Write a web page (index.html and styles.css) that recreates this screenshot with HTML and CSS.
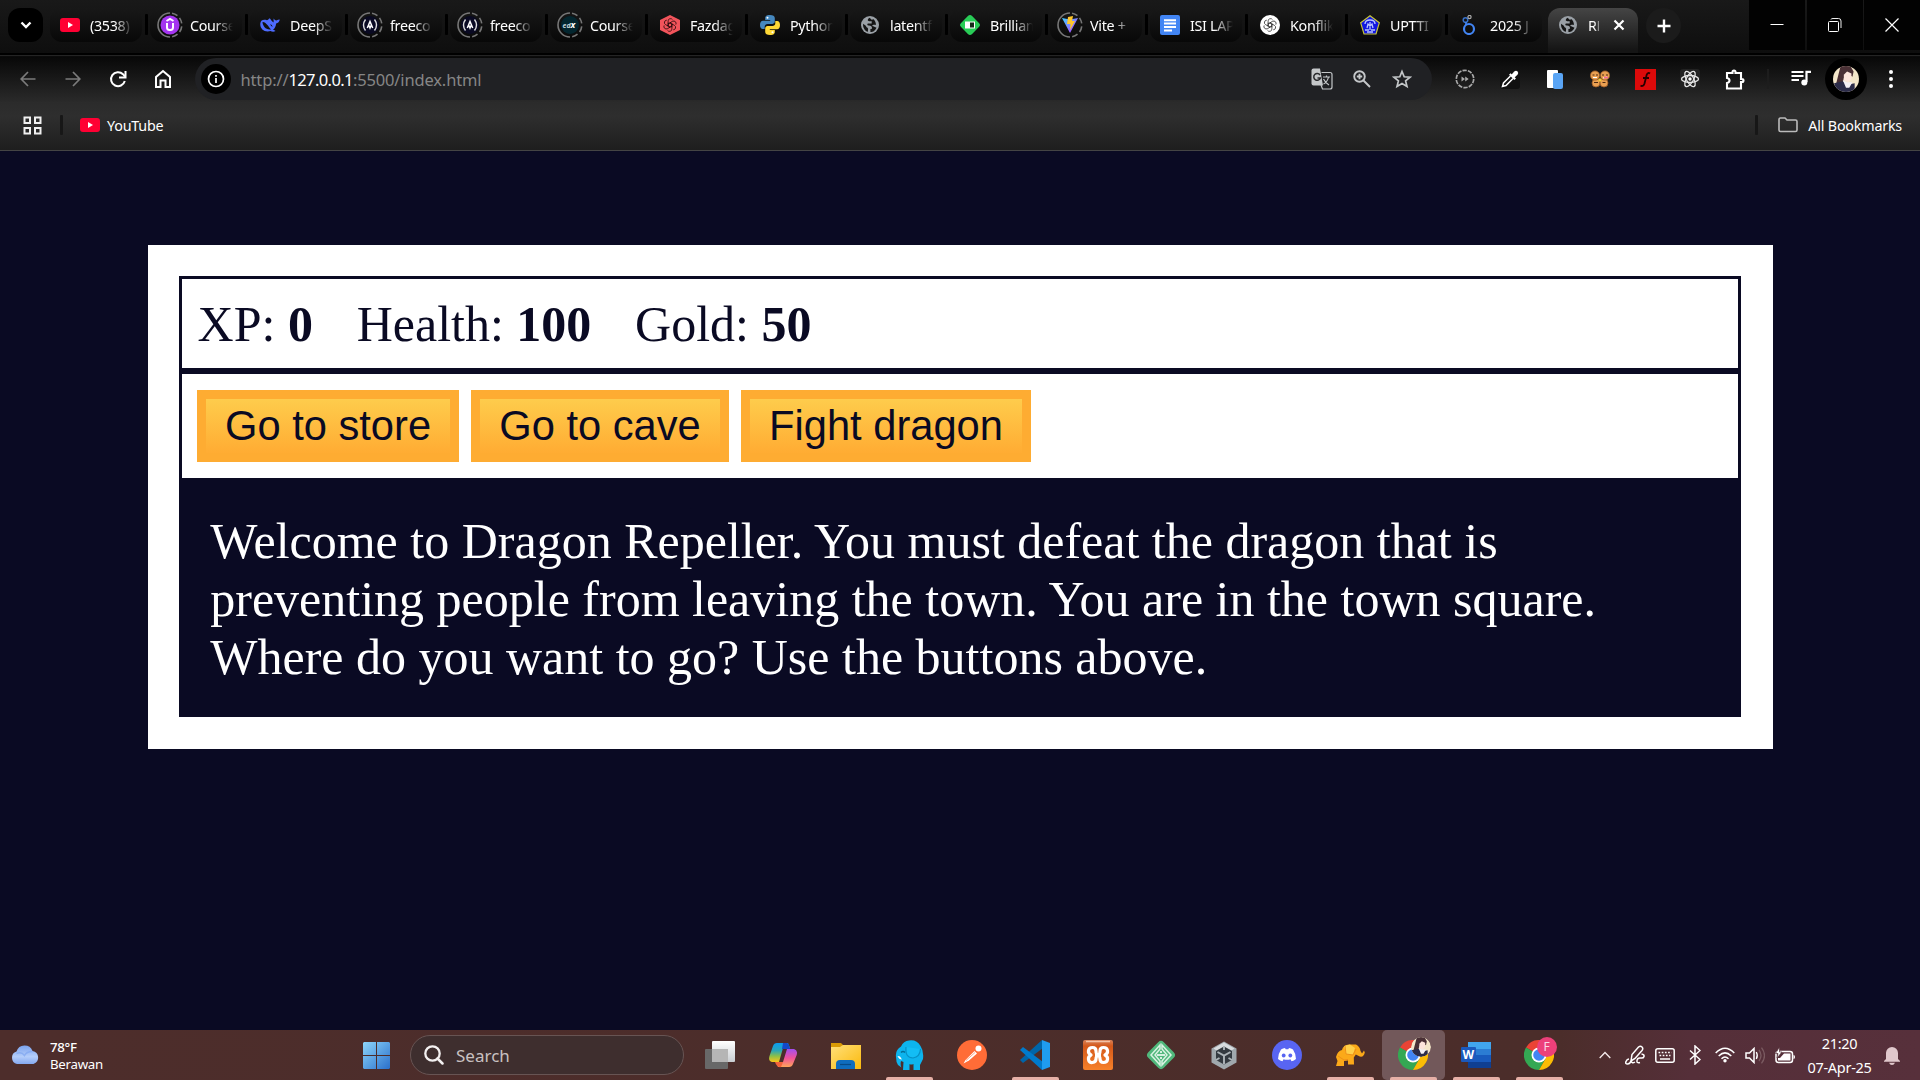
FILE: index.html
```html
<!DOCTYPE html>
<html lang="en">
<head>
<meta charset="utf-8">
<title>RPG - Dragon Repeller</title>
<link rel="stylesheet" href="styles.css">
</head>
<body>
<svg class="defs" width="0" height="0" aria-hidden="true">
  <defs>
    <linearGradient id="gWin" x1="0" y1="0" x2="1" y2="1"><stop offset="0" stop-color="#8dd6fb"/><stop offset="1" stop-color="#2a6fcb"/></linearGradient>
    <linearGradient id="gCloud" x1="0" y1="0" x2="0" y2="1"><stop offset="0" stop-color="#7ba3ee"/><stop offset=".6" stop-color="#b4cdfa"/><stop offset="1" stop-color="#84a8ef"/></linearGradient>
    <linearGradient id="gFolder" x1="0" y1="0" x2="1" y2="1"><stop offset="0" stop-color="#ffe07a"/><stop offset="1" stop-color="#fbb90c"/></linearGradient>
    <linearGradient id="gView" x1="0" y1="0" x2="0" y2="1"><stop offset="0" stop-color="#fff"/><stop offset="1" stop-color="#c9cdd1"/></linearGradient>
    <linearGradient id="gCopL" x1="0" y1="0" x2="0" y2="1"><stop offset="0" stop-color="#0a9df0"/><stop offset=".4" stop-color="#2aa6b8"/><stop offset=".7" stop-color="#8fc046"/><stop offset="1" stop-color="#fcc419"/></linearGradient>
    <linearGradient id="gCopR" x1="0" y1="0" x2="0" y2="1"><stop offset="0" stop-color="#a24ef0"/><stop offset=".5" stop-color="#f0529a"/><stop offset="1" stop-color="#ffa559"/></linearGradient>
    <linearGradient id="gVite" x1="0" y1="0" x2="1" y2="1"><stop offset="0" stop-color="#41d1ff"/><stop offset="1" stop-color="#bd34fe"/></linearGradient>
    <linearGradient id="gXampp" x1="0" y1="0" x2="0" y2="1"><stop offset="0" stop-color="#d9835a"/><stop offset=".2" stop-color="#d4581a"/><stop offset="1" stop-color="#f7812a"/></linearGradient>
    <symbol id="ring" viewBox="0 0 26 26"><path d="M13 1A12 12 0 1 0 13 25" fill="none" stroke="#777" stroke-width="1.600"/><path d="M15 1.200A12 12 0 0 1 15 24.800" fill="none" stroke="#777" stroke-width="1.600" stroke-dasharray="6 3"/></symbol>
    <symbol id="youtube" viewBox="0 0 20 20"><rect y="3" width="20" height="14" rx="3" fill="#f03"/><path d="M8 7v6l5-3z" fill="#fff"/></symbol>
    <symbol id="globe" viewBox="0 0 20 20"><circle cx="10" cy="10" r="9" fill="#9aa0a6"/><path d="M9.800 2.800C7 4.200 7.400 6.300 9.500 6.200h2.200v2.300H8.300c-1.500.1-1.200 2 .2 2.100 2.300-.2 3.700 1 3.500 3.200l-1.600.2v3.100c2.700.1 5.500-2.100 6-4.700-1.500 0-2.700-1.300-4.200-1.400 0-1.500 2.500-1.600 3.800-1.100-.1-2.300-1.100-4.600-2.900-5.800-.4.900-2 .7-2.300-.1zM3 8.700c1.200 1.100 3 1.600 3.200 2.900.3 1.200 1.700.8 1.900 2.200l-.2 3C4.700 16 2.800 12.300 3 8.700z" fill="#151515"/></symbol>
    <symbol id="fcc" viewBox="0 0 26 26"><use href="#ring"/><circle cx="13" cy="13" r="9" fill="#0a0a23"/><path d="M8.500 7.500q-4 5.500 0 11M17.500 7.500q4 5.500 0 11" fill="none" stroke="#ddd" stroke-width="1.400"/><path d="M10.300 16 13 9.500l2.700 6.500M12 13.500l1 2.500 1-2.500" fill="none" stroke="#fff" stroke-width="1.500"/></symbol>
    <symbol id="openai" viewBox="0 0 20 20"><g fill="none" stroke="currentColor" stroke-width="1.100"><path id="petal" d="M7.300 8.400V4.200a3.400 3.400 0 0 1 6.300-1.700M7.300 8.400 10 7l4.200 2.400"/><use href="#petal" transform="rotate(60 10 10)"/><use href="#petal" transform="rotate(120 10 10)"/><use href="#petal" transform="rotate(180 10 10)"/><use href="#petal" transform="rotate(240 10 10)"/><use href="#petal" transform="rotate(300 10 10)"/></g></symbol>
    <symbol id="chrome" viewBox="0 0 30 30"><path d="M15 15 2 7.500A15 15 0 0 1 28 7.500z" fill="#ea4335"/><path d="M15 15 2 7.500A15 15 0 0 0 15 30L21.500 18.750z" fill="#34a853"/><path d="M15 7.500h13A15 15 0 0 1 15 30l6.500-11.250z" fill="#fbbc05"/><circle cx="15" cy="15" r="7.500" fill="#fff"/><circle cx="15" cy="15" r="5.800" fill="#4285f4"/></symbol>
    <symbol id="avatar" viewBox="0 0 24 24"><clipPath id="cAv"><circle cx="12" cy="12" r="12"/></clipPath><g clip-path="url(#cAv)"><path d="M0 0h24v24H0z" fill="#f4e7ca"/><path d="M7 0h9l3 5-1 5-5-3-3 4-1 5-3 2-3-2z" fill="#4a3035"/><path d="M10 8l3-3 4 2v5l-3 3-4-2z" fill="#fde5dc"/><path d="M1 16l8-2 5 3 6-1v8H3z" fill="#2c2c49"/><path d="M9 13l4 2 5 0-3 5-3 0z" fill="#f4f0f5"/></g></symbol>
  </defs>
</svg>

<header class="browser">
  <div class="tabstrip">
    <div class="tab-search"><svg width="14" height="14" viewBox="0 0 14 14"><path d="m2.500 4.500 4.500 4.500 4.500-4.500" fill="none" stroke="#fff" stroke-width="2.400"/></svg></div>
    <div class="tabs">
      <div class="tab"><svg class="fav"><use href="#youtube"/></svg><span>(3538)</span></div>
      <div class="tab"><svg class="fav ringed" viewBox="0 0 26 26"><use href="#ring"/><circle cx="13" cy="13" r="9.500" fill="#a435f0"/><path d="M10 11v4.500q0 2.500 3 2.500t3-2.500V11M9.500 9 13 7l3.500 2" fill="none" stroke="#fff" stroke-width="2"/></svg><span>Course</span></div>
      <div class="tab"><svg class="fav" viewBox="0 0 20 20"><path d="M.3 8.500C.7 4.500 4 4.300 7 5.200 9 4.600 8.300 4 9.800 3.300q1.700 2.800 3.700 4.200c.4-1.700-.2-2.500.2-4 .7 1.300 1.500 1.800 2.700 1.900q1.500-.9 3.400-.9c-.4 2.200-1.700 3.600-3.700 3.900-.2 3-1.500 5-3 6.200.8.800 1.700.9 2.400 1.400-1.500 1-3.500.8-5 .1C4.500 17.800-.2 14 .3 8.500z" fill="#4d6bfe"/><path d="M2.500 7c4.500.2 6.500 6.300 8.700 7.300-4.700 1.200-8.500-3-8.700-7.300zM10 9.200q2.500.3 2.600 2.800-1.800-1-2.600-2.800z" fill="#111"/></svg><span>DeepS</span></div>
      <div class="tab"><svg class="fav ringed"><use href="#fcc"/></svg><span>freeco</span></div>
      <div class="tab"><svg class="fav ringed"><use href="#fcc"/></svg><span>freeco</span></div>
      <div class="tab"><svg class="fav ringed" viewBox="0 0 26 26"><use href="#ring"/><circle cx="13" cy="13" r="9" fill="#03262f"/><text x="5.500" y="16" class="edx">ed<tspan class="edx-x">x</tspan></text></svg><span>Course</span></div>
      <div class="tab"><svg class="fav dark" viewBox="0 0 20 20"><path d="m10 0 10 5v10l-10 5-10-5V5z" fill="#f2545b"/><use href="#openai" x="3" y="3" width="14" height="14"/></svg><span>Fazdag</span></div>
      <div class="tab"><svg class="fav" viewBox="0 0 20 20"><path d="M10 0C6 0 5.200 1.500 5.200 3v2h5v.8H3C1 5.800 0 7.500 0 10s1.200 4 2.700 4h2v-2.300c0-1.700 1.300-2.800 2.800-2.800h5c1.300 0 2.300-1 2.300-2.300V3C14.800 1 13 0 10 0z" fill="#4587be"/><path d="M10 20c4 0 4.800-1.500 4.800-3v-2h-5v-.8H17c2 0 3-1.700 3-4.200s-1.200-4-2.700-4h-2v2.300c0 1.700-1.300 2.800-2.800 2.800h-5c-1.300 0-2.300 1-2.300 2.300V17c0 2 1.800 3 4.800 3z" fill="#fed836"/><circle cx="7.500" cy="2.800" r="1" fill="#fff"/><circle cx="12.500" cy="17.200" r="1" fill="#fff"/></svg><span>Python</span></div>
      <div class="tab"><svg class="fav"><use href="#globe"/></svg><span>latentf</span></div>
      <div class="tab"><svg class="fav" viewBox="0 0 20 20"><rect x="3.200" y="3.200" width="13.600" height="13.600" rx="2" transform="rotate(45 10 10)" fill="#29cc57" stroke="#29cc57" stroke-width="2"/><path d="M5 6.500h10v7H5z" fill="#fff"/><path d="M10 7.500h4v5h-4z" fill="#142a19"/></svg><span>Brillian</span></div>
      <div class="tab"><svg class="fav ringed" viewBox="0 0 26 26"><use href="#ring"/><path d="m5 6 8 15L21 6l-8 1.500z" fill="url(#gVite)"/><path d="m11 5 5-1-1 5h3l-5 9 .5-6H10z" fill="#ffc62b"/></svg><span>Vite +</span></div>
      <div class="tab"><svg class="fav" viewBox="0 0 20 20"><rect width="20" height="20" rx="2" fill="#4285f4"/><path d="M4 5.200h12M4 8.500h12M4 12h12M4 15.500h8" stroke="#fff" stroke-width="1.900"/></svg><span>ISI LAP</span></div>
      <div class="tab"><svg class="fav grey" viewBox="0 0 20 20"><circle cx="10" cy="10" r="10" fill="#fff"/><use href="#openai" x="3" y="3" width="14" height="14"/></svg><span>Konflik</span></div>
      <div class="tab"><svg class="fav" viewBox="0 0 20 20"><path d="m10 .8 9.300 7L16 19H4L.7 7.800z" fill="#1117e0" stroke="#c7c53c" stroke-width="1.200"/><path d="M5 9q0-4 5-4t5 4M7 13l1-4 2 2 2-2 1 4M5 15h4m2 0h4M7 17h6M10 7v8" fill="none" stroke="#b9c5ff" stroke-width="1.300"/></svg><span>UPTTI</span></div>
      <div class="tab"><svg class="fav" viewBox="0 0 20 20"><circle cx="9" cy="14" r="5" fill="none" stroke="#4285f4" stroke-width="2.200"/><circle cx="5.500" cy="5" r="2.300" fill="none" stroke="#3770c8" stroke-width="1.500"/><circle cx="9.500" cy="2" r="1.600" fill="none" stroke="#aaa" stroke-width="1.200"/><path d="M6 7v3" stroke="#4285f4" stroke-width="1.700"/></svg><span>2025 J</span></div>
      <div class="tab active"><svg class="fav"><use href="#globe"/></svg><span>RP</span><svg class="close" viewBox="0 0 12 12"><path d="m1.500 1.500 9 9m0-9-9 9" stroke="#fff" stroke-width="2.200"/></svg></div>
    </div>
    <div class="new-tab"><svg width="14" height="14" viewBox="0 0 14 14"><path d="M7 .5v13M.5 7h13" stroke="#fff" stroke-width="2.400"/></svg></div>
    <div class="window-buttons">
      <div><svg width="14" height="14"><path d="M.5 6.500h13" stroke="#fff" stroke-width="1"/></svg></div>
      <div><svg width="14" height="14"><rect x=".5" y="3.500" width="10" height="10" rx="1" fill="none" stroke="#fff"/><path d="M3 1.500q0-1 2-1h5.500q2.500 0 2.500 2.500v7" fill="none" stroke="#eee"/></svg></div>
      <div><svg width="14" height="14"><path d="m.5.5 13 13m0-13-13 13" stroke="#fff" stroke-width="1.200"/></svg></div>
    </div>
  </div>

  <div class="toolbar">
    <div class="slot"><svg width="16" height="16" viewBox="0 0 16 16"><path d="M15.500 8H1.500M8 1 1.200 8 8 15" fill="none" stroke="#7b7b7b" stroke-width="1.700"/></svg></div>
    <div class="slot"><svg width="16" height="16" viewBox="0 0 16 16"><path d="M.5 8h14M8 1l6.800 7L8 15" fill="none" stroke="#7b7b7b" stroke-width="1.700"/></svg></div>
    <div class="slot"><svg width="18" height="18" viewBox="0 0 18 18"><path d="M15.800 11A7 7 0 1 1 14 4.200L16 6.500" fill="none" stroke="#fff" stroke-width="2"/><path d="M16.500 1v6.500H10" fill="none" stroke="#fff" stroke-width="2"/></svg></div>
    <div class="slot"><svg width="18" height="20" viewBox="0 0 18 20"><path d="M2 18V8l7-6 7 6v10h-4.500v-6.500h-5V18z" fill="none" stroke="#fff" stroke-width="2"/></svg></div>
    <div class="omnibox">
      <div class="site-info"><svg width="18" height="18" viewBox="0 0 18 18"><circle cx="9" cy="9" r="7.500" fill="none" stroke="#fff" stroke-width="1.700"/><path d="M9 8v5M9 5v1.700" stroke="#fff" stroke-width="1.700"/></svg></div>
      <div class="url">http://<b>127.0.0.1</b>:5500/index.html</div>
      <div class="omni-icon"><svg width="22" height="22" viewBox="0 0 22 22"><path d="M10.500 4.500H19q2 0 2 2V19q0 2-2 2h-7.500L10 17" fill="none" stroke="#c4c7c9" stroke-width="1.200"/><path d="M2.500.5H9l3 17H2.500q-2 0-2-2v-13q0-2 2-2z" fill="#c4c7c9"/><path d="M9 7a3.400 3.400 0 1 0 .4 3H6.500" fill="none" stroke="#292a2d" stroke-width="1.500"/><path d="M12 9h7m-3.500-1.500V9m2 0q-1 5-5 7m0-5q2 4 5.500 6" fill="none" stroke="#c4c7c9" stroke-width="1.200"/></svg></div>
      <div class="omni-icon"><svg width="18" height="18" viewBox="0 0 18 18"><circle cx="6.500" cy="6.500" r="5.300" fill="none" stroke="#c4c7c9" stroke-width="1.900"/><path d="m10.500 10.500 6.500 6.500M3.800 6.500h5.400M6.500 3.800v5.400" stroke="#c4c7c9" stroke-width="1.900"/></svg></div>
      <div class="omni-icon"><svg width="20" height="20" viewBox="0 0 20 20"><path d="m10 2.500 2.200 5.300 5.800.4-4.400 3.700 1.400 5.600-5-3-5 3 1.400-5.600L2 8.200l5.800-.4z" fill="none" stroke="#c4c7c9" stroke-width="1.700"/></svg></div>
    </div>
    <div class="slot"><svg width="20" height="20" viewBox="0 0 20 20"><circle cx="10" cy="10" r="8.700" fill="none" stroke="#a9a9a9" stroke-width="1.700" stroke-dasharray="4.300 1.160"/><path d="m6.500 7.500 3.500 2.500-3.500 2.500zM10.200 7.500l3.500 2.500-3.500 2.500z" fill="#a9a9a9"/></svg></div>
    <div class="slot"><div class="dropper"><svg width="18" height="18" viewBox="0 0 18 18"><path d="m10 5.200 3-3.500q2-1.700 3.500-.2t0 3.300L13 8z" fill="#fff"/><path d="m8.800 4 5.400 5.300" stroke="#fff" stroke-width="2.200"/><path d="m9.500 6-7 7-1 3.500L5 15.500l7-7" fill="none" stroke="#fff" stroke-width="1.500"/></svg></div></div>
    <div class="slot"><svg width="18" height="20" viewBox="0 0 18 20"><rect x="1" y="1" width="11" height="18" rx="1" fill="#fff"/><rect x="7" y="4" width="10" height="16" rx="2" fill="#5aa5f5"/></svg></div>
    <div class="slot"><svg width="20" height="18" viewBox="0 0 20 18"><g fill="#eaa052" stroke="#9d5b24" stroke-width=".8"><circle cx="6" cy="13" r="4"/><circle cx="14" cy="13" r="4"/><circle cx="5" cy="5.500" r="4.600"/><circle cx="15" cy="5.500" r="4.600"/></g><path d="M2.500 5h2m1.500 0h2M12 5h2m2 0h2M4 12.500h4m4.500 0h3" stroke="#4a2912"/><path d="M3 7.500h4M13 8l4-1" stroke="#fff"/><circle cx="10" cy="10" r="1.800" fill="#f9cd3b"/><path d="M14 7.500h4" stroke="#f0679b" stroke-width="1.500"/></svg></div>
    <div class="slot"><svg width="21" height="21" viewBox="0 0 21 21"><path d="M0 0h21v21H0z" fill="#dc0a0a"/><path d="M15 4.500q-2-1.500-3.300 1.200L9.500 14.500q-1 3.300-4 2.200M8 9h6" fill="none" stroke="#250000" stroke-width="1.800"/></svg></div>
    <div class="slot"><svg width="20" height="20" viewBox="0 0 20 20"><rect width="20" height="20" rx="3" fill="#222"/><g fill="none" stroke="#e6e6e6" stroke-width="1.300"><ellipse cx="10" cy="10" rx="8.500" ry="3.500"/><ellipse cx="10" cy="10" rx="8.500" ry="3.500" transform="rotate(60 10 10)"/><ellipse cx="10" cy="10" rx="8.500" ry="3.500" transform="rotate(120 10 10)"/></g><circle cx="10" cy="10" r="1.700" fill="#fff"/></svg></div>
    <div class="slot"><svg width="20" height="21" viewBox="0 0 20 21"><path d="M2 4h5.500V3a1.500 1.500 0 0 1 3 0v1H16v6h1a1.500 1.500 0 0 1 0 3h-1v6.500H2V14q2.500-.5 2.500-2.500T2 9z" fill="none" stroke="#fff" stroke-width="2.100"/></svg></div>
    <div class="bar-gap"><i></i></div>
    <div class="slot media"><svg width="20" height="17" viewBox="0 0 20 17"><path d="M.5 2h12M.5 6h12M.5 10h7.500M15.500 12V1.800H20" fill="none" stroke="#fff" stroke-width="2.200"/><circle cx="13.300" cy="12.500" r="3" fill="#fff"/></svg></div>
    <div class="slot"><div class="profile"><svg width="26" height="26"><use href="#avatar"/></svg></div></div>
    <div class="slot"><svg width="4" height="18" fill="#fff"><circle cx="2" cy="2" r="2"/><circle cx="2" cy="9" r="2"/><circle cx="2" cy="16" r="2"/></svg></div>
  </div>

  <div class="bookmarks">
    <svg class="apps" width="19" height="19" viewBox="0 0 19 19"><g fill="none" stroke="#f0f0f0" stroke-width="2"><path d="M1.500 1.500h5.500V7H1.500zM12 1.500h5.500V7H12zM1.500 12h5.500v5.500H1.500zM12 12h5.500v5.500H12z"/></g></svg>
    <i class="divider"></i>
    <svg class="yt" width="20" height="20"><use href="#youtube"/></svg>
    <span class="yt-label">YouTube</span>
    <i class="divider right"></i>
    <svg class="folder" width="20" height="16" viewBox="0 0 20 16"><path d="M1 13V2.500Q1 1 2.500 1H7l2 2h8.500Q19 3 19 4.500V13q0 1.500-1.500 1.500h-15Q1 14.500 1 13z" fill="none" stroke="#bbb" stroke-width="1.600"/></svg>
    <span class="all">All Bookmarks</span>
  </div>
</header>

<main class="page">
  <div class="game">
    <div class="stats">
      <span class="stat">XP: <strong>0</strong></span>
      <span class="stat">Health: <strong>100</strong></span>
      <span class="stat">Gold: <strong>50</strong></span>
    </div>
    <div class="controls">
      <button>Go to store</button>
      <button>Go to cave</button>
      <button>Fight dragon</button>
    </div>
    <div class="text">Welcome to Dragon Repeller. You must defeat the dragon that is preventing people from leaving the town. You are in the town square. Where do you want to go? Use the buttons above.</div>
  </div>
</main>

<footer class="taskbar">
  <div class="weather">
    <svg width="30" height="20" viewBox="0 0 30 20"><path d="M7 19a6.500 6.500 0 0 1-.5-12.500A8.500 8.500 0 0 1 22.500 6 6.700 6.700 0 0 1 23.500 19z" fill="url(#gCloud)"/><path d="M6.500 8.500q5-2 8 2 2-4 8-4" fill="none" stroke="#7fa5ef" stroke-width="1.500" opacity=".7"/></svg>
    <div class="weather-text"><div class="temp">78°F</div><div>Berawan</div></div>
  </div>
  <svg class="start" width="27" height="27" viewBox="0 0 27 27"><path d="M1 0h12v13H0V1zM14 0h12l1 1v12H14zM0 14h13v13H1l-1-1zM14 14h13v12l-1 1H14z" fill="url(#gWin)"/></svg>
  <div class="search"><svg width="20" height="20" viewBox="0 0 20 20"><circle cx="8.500" cy="8.500" r="7.200" fill="none" stroke="#f3f0f0" stroke-width="2.300"/><path d="m13.500 13.500 5 5" stroke="#f3f0f0" stroke-width="2.500" stroke-linecap="round"/></svg><span>Search</span></div>
  <div class="apps-row">
    <div class="app"><svg width="30" height="28" viewBox="0 0 30 28"><rect y="8" width="23" height="20" rx="1" fill="#686868"/><rect x="7" width="23" height="21" rx="1" fill="url(#gView)"/><path d="M7 8h16v13H7z" fill="#b5b5b5"/></svg></div>
    <div class="app"><svg width="28" height="26" viewBox="0 0 28 26"><path d="M8 1h11l2 5h-7l-4 14H3q-4-1-2.500-6L4 4q1-3 4-3z" fill="url(#gCopL)"/><path d="M14 1h4q2 0 3 6h-8z" fill="#1449c9"/><path d="M20 25H9l-2-5h7l4-13h7q4 1 2.700 6L24 22q-1 3-4 3z" fill="url(#gCopR)"/><path d="M6 20h8l-2 5q-4 1-6-5z" fill="#f4623a"/></svg></div>
    <div class="app"><svg width="30" height="27" viewBox="0 0 30 27"><path d="M0 1h10l3 3v5H0z" fill="#d99a05"/><path d="M0 5h9l3-2h18v24H0z" fill="url(#gFolder)"/><path d="M5 27v-5q0-4 4-4h11q4 0 4 4v5z" fill="#0f6cbd"/><path d="M9 22.500h11" stroke="#084a86" stroke-width="1.200"/></svg></div>
    <div class="app running"><svg width="30" height="30" viewBox="0 0 30 30"><path d="M2 17Q1 10 7 6.500 9.500 1 15 .5q8-1 11.500 5.500 3.500 5 2.500 13l-3 6v5h-6.500v-6q-2.500 1-4 0v6H9l.5-8-2.500-1q-1 4 .5 6.500L4 25q-2-3-2-8z" fill="#0db4ee"/><path d="M12 7q-1 11 7 11 7-1 7.500-9" fill="#13bdf5" stroke="#0791c6" stroke-width="1.200"/><path d="M7 12.500q2-2 4 0" fill="none" stroke="#056c96" stroke-width="1.400"/><path d="M3.500 16q1.500 3.500 4.500 3.500l-2-3z" fill="#fff"/></svg></div>
    <div class="app"><svg width="30" height="30" viewBox="0 0 30 30"><circle cx="15" cy="15" r="15" fill="#ff6c37"/><path d="m6.500 23.500 2-3.500L17.500 11l2.500 2.500-8 7z" fill="#fff"/><path d="m9 20.500 9-8" stroke="#ff6c37" stroke-width=".6"/><circle cx="21.500" cy="8.500" r="3" fill="#fff"/></svg></div>
    <div class="app running"><svg width="30" height="30" viewBox="0 0 30 30"><path d="M22 0 0 20l3 3L23 8z" fill="#0065a9"/><path d="M22 30 0 10l3-3 20 15z" fill="#007acc"/><path d="m22 0 8 3v24l-8 3z" fill="#1f9cf0"/></svg></div>
    <div class="app"><svg width="30" height="30" viewBox="0 0 30 30"><rect width="30" height="30" rx="2" fill="url(#gXampp)"/><path d="M3 1.500h24" stroke="#f3c2a4" stroke-width="1.500"/><path d="M12 15h6M8 15q-3-1.500-2.500-4.500Q6 7.500 9.500 7.500t3.500 3.500 2 3.500q2 0 2-3.500t3.500-3.500 4 3Q25 13.500 22 15q3 1.500 2.500 4.500-.5 3-4 3T17 19q0-3-2-3.500-2 .5-2 3.500t-3.500 3.500-4-3Q5 16.500 8 15z" fill="none" stroke="#fff" stroke-width="3.200" stroke-linejoin="round"/></svg></div>
    <div class="app"><svg width="30" height="30" viewBox="0 0 30 30"><rect x="4" y="4" width="22" height="22" rx="4" transform="rotate(45 15 15)" fill="#51b87c"/><path d="M14 5 5 15l9 10v-4l-5-6 5-6zM16 5l9 10-9 10v-4l5-6-5-6z" fill="none" stroke="#d8f2e2" stroke-width="1.500"/><path d="M11 15h8M14 12h2M14 18h2" stroke="#fff" stroke-width="1.700"/></svg></div>
    <div class="app"><svg width="26" height="29" viewBox="0 0 26 29"><path d="m13 .5 12.500 7v14l-12.500 7-12.500-7v-14z" fill="#a0a8ad"/><path d="m13 1.500 10.500 6-3 2L13 5.500l-7.500 4-3-2z" fill="#d8dcdf"/><path d="m13 5.500 8 4.500v9L13 23.500 5 19v-9z" fill="#343a40"/><path d="m6.500 11 6.500 3.700 6.500-3.700M13 14.500V23M13 5.500V9M5 19l3.500-2m12.500 2-3.500-2" fill="none" stroke="#aeb5b9" stroke-width="1.900"/></svg></div>
    <div class="app"><svg width="30" height="30" viewBox="0 0 30 30"><circle cx="15" cy="15" r="15" fill="#5865f2"/><path d="M9 9.500q2-1.300 4-1.500l.7 1.300h2.600L17 8q2 .2 4 1.500 3 4.500 3 9.500-2 1.700-4.500 2.300l-1-2q-3.500 1-7 0l-1 2Q8 20.700 6 19q0-5 3-9.500z" fill="#fff"/><ellipse cx="11.700" cy="15.500" rx="1.900" ry="2.100" fill="#5865f2"/><ellipse cx="18.300" cy="15.500" rx="1.900" ry="2.100" fill="#5865f2"/></svg></div>
    <div class="app running"><svg width="30" height="24" viewBox="0 0 30 24"><path d="M1 14q1.500-6 6-7 1-5 7-5.500h7q4 2 4.500 6.500l1.500 2.500 2-3 .8 2q-1 5-5 4l-4-2-2 3 .2 7H13v-4l-4 .5V23H1l1.500-5z" fill="#fba919"/><path d="m9 3 6-1.500L20 5l-2 7-7-1z" fill="#ffd04a"/><path d="m10 3 1 8 7 1 3-6M3 13l6 4 4-.5" fill="none" stroke="#ee8f17" stroke-width="1"/></svg></div>
    <div class="app running current"><svg width="30" height="30"><use href="#chrome"/></svg><svg class="badge" width="20" height="20"><use href="#avatar"/></svg></div>
    <div class="app running"><svg width="30" height="26" viewBox="0 0 30 26"><path d="M7 0h23v7H7z" fill="#41a5ee"/><path d="M7 7h23v6H7z" fill="#2b7cd3"/><path d="M7 13h23v7H7z" fill="#185abd"/><path d="M7 20h23v6H7z" fill="#103f91"/><rect y="5" width="15" height="15" rx="1" fill="#1b59bd"/><text x="1.500" y="17" class="word-w">W</text></svg></div>
    <div class="app running"><svg width="30" height="30"><use href="#chrome"/></svg><span class="badge letter">F</span></div>
  </div>
  <div class="tray">
    <div class="tray-icon up"><svg width="12" height="8"><path d="m.7 7 5.300-5.500L11.300 7" fill="none" stroke="#f5ecec" stroke-width="1.300"/></svg></div>
    <div class="tray-icon"><svg width="20" height="20" viewBox="0 0 20 20"><path d="M6 16 7 9.500l6.500-7.500q2-1.500 3.500 0t0 3.500L10 13.500zM6 16q-1 3-3.500 3T1 16.500 4 14M6 16q1 3 4 1M16.500 9q3 .5 2.500 2.500T15.500 13 12 15.500t3 2" fill="none" stroke="#fff" stroke-width="1.500"/></svg></div>
    <div class="tray-icon"><svg width="20" height="15" viewBox="0 0 20 15"><rect x=".8" y=".8" width="18.400" height="13.400" rx="2" fill="none" stroke="#fff" stroke-width="1.500"/><path d="M3.500 4.500h13M4.500 7.500h11" stroke="#fff" stroke-width="1.500" stroke-dasharray="1.700 1.500"/><path d="M5 11h10" stroke="#fff" stroke-width="1.500"/></svg></div>
    <div class="tray-icon"><svg width="12" height="20" viewBox="0 0 12 20"><path d="m1 5.500 10 9L6 19V1l5 4.500-10 9" fill="none" stroke="#fff" stroke-width="1.500"/></svg></div>
    <div class="tray-icon"><svg width="20" height="16" viewBox="0 0 20 16"><g fill="none" stroke="#fff" stroke-width="1.500"><path d="M.7 6q9.300-9.500 18.600 0M3.700 9q6.300-6.300 12.600 0M6.500 11.800q3.500-3.500 7 0"/></g><circle cx="10" cy="13.700" r="1.700" fill="#fff"/></svg></div>
    <div class="tray-icon"><svg width="20" height="17" viewBox="0 0 20 17"><path d="M1 6h3.500L9 1.500v14L4.500 11H1z" fill="none" stroke="#fff" stroke-width="1.500"/><path d="M11.300 5q2 3.500 0 7" fill="none" stroke="#fff" stroke-width="1.300"/><path d="M14 3q4 5.500 0 11M16.500.7q6 8 0 15.600" fill="none" stroke="#7a5a60" stroke-width="1.300"/></svg></div>
    <div class="tray-icon"><svg width="20" height="17" viewBox="0 0 20 17"><rect x="1" y="4.500" width="16.500" height="11" rx="2.500" fill="none" stroke="#fff" stroke-width="1.500"/><path d="M18.500 8q1.500 0 1.500 2t-1.500 2z" fill="#fff"/><path d="M5 11 9 6.500h6.500v7H3V11z" fill="#fff"/><path d="M4.500 0 .5 6.500H3L2 11l5-6H4.500z" fill="#fff" stroke="#54303a" stroke-width=".7"/></svg></div>
    <div class="clock"><div>21:20</div><div>07-Apr-25</div></div>
    <svg class="bell" width="16" height="19" viewBox="0 0 16 19"><path d="M2 13V7a6 6 0 0 1 12 0v6l2 2v.8H0V15zM5 16.800h6q-1 2.200-3 2.200t-3-2.200z" fill="#e0c8cc"/></svg>
  </div>
</footer>
</body>
</html>
```
FILE: styles.css
```css
* { box-sizing: border-box; }
body {
  margin: 0;
  width: 1920px;
  height: 1080px;
  overflow: hidden;
  display: flex;
  flex-direction: column;
  background: #0a0a23;
  font-family: "Noto Sans", sans-serif;
  color: #fff;
}
svg { display: block; flex: none; }
.defs { position: absolute; }

/* Browser window */
.browser {
  height: 151px;
  flex: none;
  display: flex;
  flex-direction: column;
  background: #2c2c2c;
  border-bottom: 1px solid #444;
}
.tabstrip {
  height: 57px;
  flex: none;
  display: flex;
  align-items: flex-start;
  padding-left: 8px;
  background: linear-gradient(#191919 0, #0e0e0e 53px, #000 53px, #000 55px, #242424 55px, #242424 56px, #0b0b0b 56px);
}
.tab-search {
  width: 35px;
  height: 34px;
  margin: 8px 7px 0 0;
  border-radius: 12px;
  background: #000;
  display: flex;
  align-items: center;
  justify-content: center;
}
.tabs { display: flex; gap: 8px; }
.tab {
  position: relative;
  width: 92px;
  height: 34px;
  margin-top: 8px;
  padding: 0 8px 0 10px;
  display: flex;
  align-items: center;
  border-radius: 12px;
  background: linear-gradient(#181818, #080808);
}
.tab:not(.active)::after {
  content: "";
  position: absolute;
  left: 95px;
  top: 6px;
  width: 3px;
  height: 21px;
  border-radius: 1px;
  background: #000;
}
.tab:nth-child(15)::after { display: none; }
.fav { width: 20px; height: 20px; margin-right: 10px; }
.fav.ringed { width: 26px; height: 26px; margin: 0 7px 0 -3px; }
.fav.dark { color: #2b0b0d; }
.fav.grey { color: #333; }
.tab span {
  width: 43px;
  flex: none;
  overflow: hidden;
  white-space: nowrap;
  font-size: 14.300px;
  letter-spacing: -0.300px;
  line-height: 35px;
  -webkit-mask-image: linear-gradient(90deg, #000 24px, transparent 43px);
  mask-image: linear-gradient(90deg, #000 24px, transparent 43px);
}
.tab.active {
  width: 90px;
  height: 45px;
  margin-left: -2px;
  padding-bottom: 11px;
  border-radius: 12px 12px 0 0;
  background: linear-gradient(#454545, #151515 42px);
}
.tab.active span {
  width: 11px;
  margin-right: 14px;
  -webkit-mask-image: linear-gradient(90deg, #000 6px, rgba(0, 0, 0, .4) 11px);
  mask-image: linear-gradient(90deg, #000 6px, rgba(0, 0, 0, .4) 11px);
}
.close { width: 12px; height: 12px; }
.new-tab {
  width: 35px;
  height: 35px;
  margin: 8px 0 0 8px;
  border-radius: 50%;
  background: #1b1b1b;
  display: flex;
  align-items: center;
  justify-content: center;
}
.window-buttons { display: flex; gap: 1.500px; margin-left: auto; }
.window-buttons div {
  width: 56px;
  height: 50px;
  background: #020202;
  display: flex;
  align-items: center;
  justify-content: center;
}
.toolbar {
  height: 45px;
  flex: none;
  display: flex;
  align-items: center;
  padding: 0 5.500px 1px 5px;
  background: linear-gradient(#080808, #2a2a2a);
}
.slot { width: 45px; flex: none; display: flex; align-items: center; justify-content: center; }
.omnibox {
  width: 1237px;
  height: 42px;
  margin: 0 11px 0 9.500px;
  padding: 0 10px 0 6px;
  border-radius: 21px;
  background: #202124;
  display: flex;
  align-items: center;
}
.site-info {
  width: 30px;
  height: 30px;
  margin-right: 10px;
  border-radius: 50%;
  background: #000;
  display: flex;
  align-items: center;
  justify-content: center;
}
.url { flex: 1; padding-top: 1px; font-size: 16.500px; color: #868686; letter-spacing: -0.150px; }
.url b { font-weight: 400; color: #fff; letter-spacing: -0.600px; }
.omni-icon { width: 40px; display: flex; justify-content: center; }
.dropper { background: #111; border-radius: 3px; padding: 1px; }
.bar-gap { width: 21px; display: flex; justify-content: center; }
.bar-gap i { width: 2px; height: 20px; background: #1d1d1d; }
.media { padding-bottom: 2px; }
.profile {
  width: 42px;
  height: 42px;
  border-radius: 50%;
  background: #000;
  display: flex;
  align-items: center;
  justify-content: center;
}
.bookmarks {
  flex: 1;
  display: flex;
  align-items: center;
  padding: 0 18px 2px 23px;
  font-size: 14.300px;
  letter-spacing: -0.200px;
  background: linear-gradient(#2b2b2b, #2e2e2e 30%, #1e1e1e);
}
.divider { width: 3px; height: 20px; margin: 0 17px 0 18px; border-radius: 1px; background: #171717; }
.divider.right { margin: 0 20px 0 auto; }
.yt-label { margin-left: 7px; }
.all { margin-left: 10px; }
.edx { font: italic bold 7px "Noto Sans", sans-serif; fill: #c5d5d9; }
.edx-x { font-size: 9px; fill: #fff; }

/* Game page; the page is magnified, so one CSS unit of the layout is 3.125px */
.page { flex: 1; font-family: "Liberation Serif", serif; font-size: 50px; color: #0a0a23; }
.game {
  width: 1625px;
  height: 504px;
  margin: 94px 0 0 148px;
  padding: 31px 32px 32px 31px;
  background: #fff;
}
.stats {
  height: 95px;
  padding: 16.600px 15.600px 14.600px;
  border: 3px solid #0a0a23;
  line-height: 57px;
}
.stat { padding-right: 31.250px; }
.controls {
  height: 110px;
  padding: 15.600px 15.600px 15.600px 15px;
  border: 3px solid #0a0a23;
  font-size: 50px;
  line-height: 57px;
}
.controls button {
  height: 72px;
  margin: 0;
  padding: 3.125px 18.750px 3.125px 19px;
  border: 9px solid #feac32;
  border-radius: 0;
  background: linear-gradient(#fecc4c, #ffac33) padding-box;
  color: #0a0a23;
  font: 41.667px/48px "Liberation Sans", Arial, sans-serif;
  vertical-align: top;
}
.text {
  height: 236px;
  padding: 31.250px;
  background: #0a0a23;
  color: #fff;
  line-height: 58px;
}

/* Taskbar */
.taskbar {
  height: 50px;
  flex: none;
  display: flex;
  align-items: center;
  padding-left: 10px;
  background: linear-gradient(90deg, #4d2d2b 0, #4b2d2a 1560px, #552f39 1690px, #57303b 100%);
}
.weather { width: 353px; display: flex; align-items: center; gap: 10px; }
.weather-text { font-size: 13.300px; line-height: 17px; letter-spacing: -0.300px; padding-top: 2px; }
.temp { font-weight: 500; }
.search {
  width: 274px;
  height: 40px;
  margin: 0 4.500px 0 20px;
  padding-left: 13px;
  border: 1px solid #675453;
  border-radius: 20px;
  background: #3e2e2e;
  display: flex;
  align-items: center;
  gap: 12px;
  font-size: 17px;
  color: #c9c1c1;
}
.apps-row { display: flex; height: 50px; }
.app {
  position: relative;
  width: 63px;
  display: flex;
  align-items: center;
  justify-content: center;
}
.running::after {
  content: "";
  position: absolute;
  left: 8px;
  bottom: 0;
  width: 47px;
  height: 3px;
  border-radius: 2px 2px 0 0;
  background: #e6b0a7;
}
.current { background: #72585a; border-radius: 5px; }
.badge { position: absolute; left: 29px; top: 7px; width: 20px; height: 20px; border-radius: 50%; }
.badge.letter { background: #ec407a; color: #fbd9e5; font-size: 12px; line-height: 20px; text-align: center; }
.word-w { font: bold 12px "Noto Sans", sans-serif; fill: #fff; }
.tray { display: flex; align-items: center; margin-left: 19px; }
.tray-icon { width: 30px; display: flex; justify-content: center; }
.clock {
  width: 80px;
  font-size: 14.500px;
  line-height: 24px;
  letter-spacing: -0.300px;
  text-align: center;
  white-space: nowrap;
}
.bell { margin-left: 4px; }
```
